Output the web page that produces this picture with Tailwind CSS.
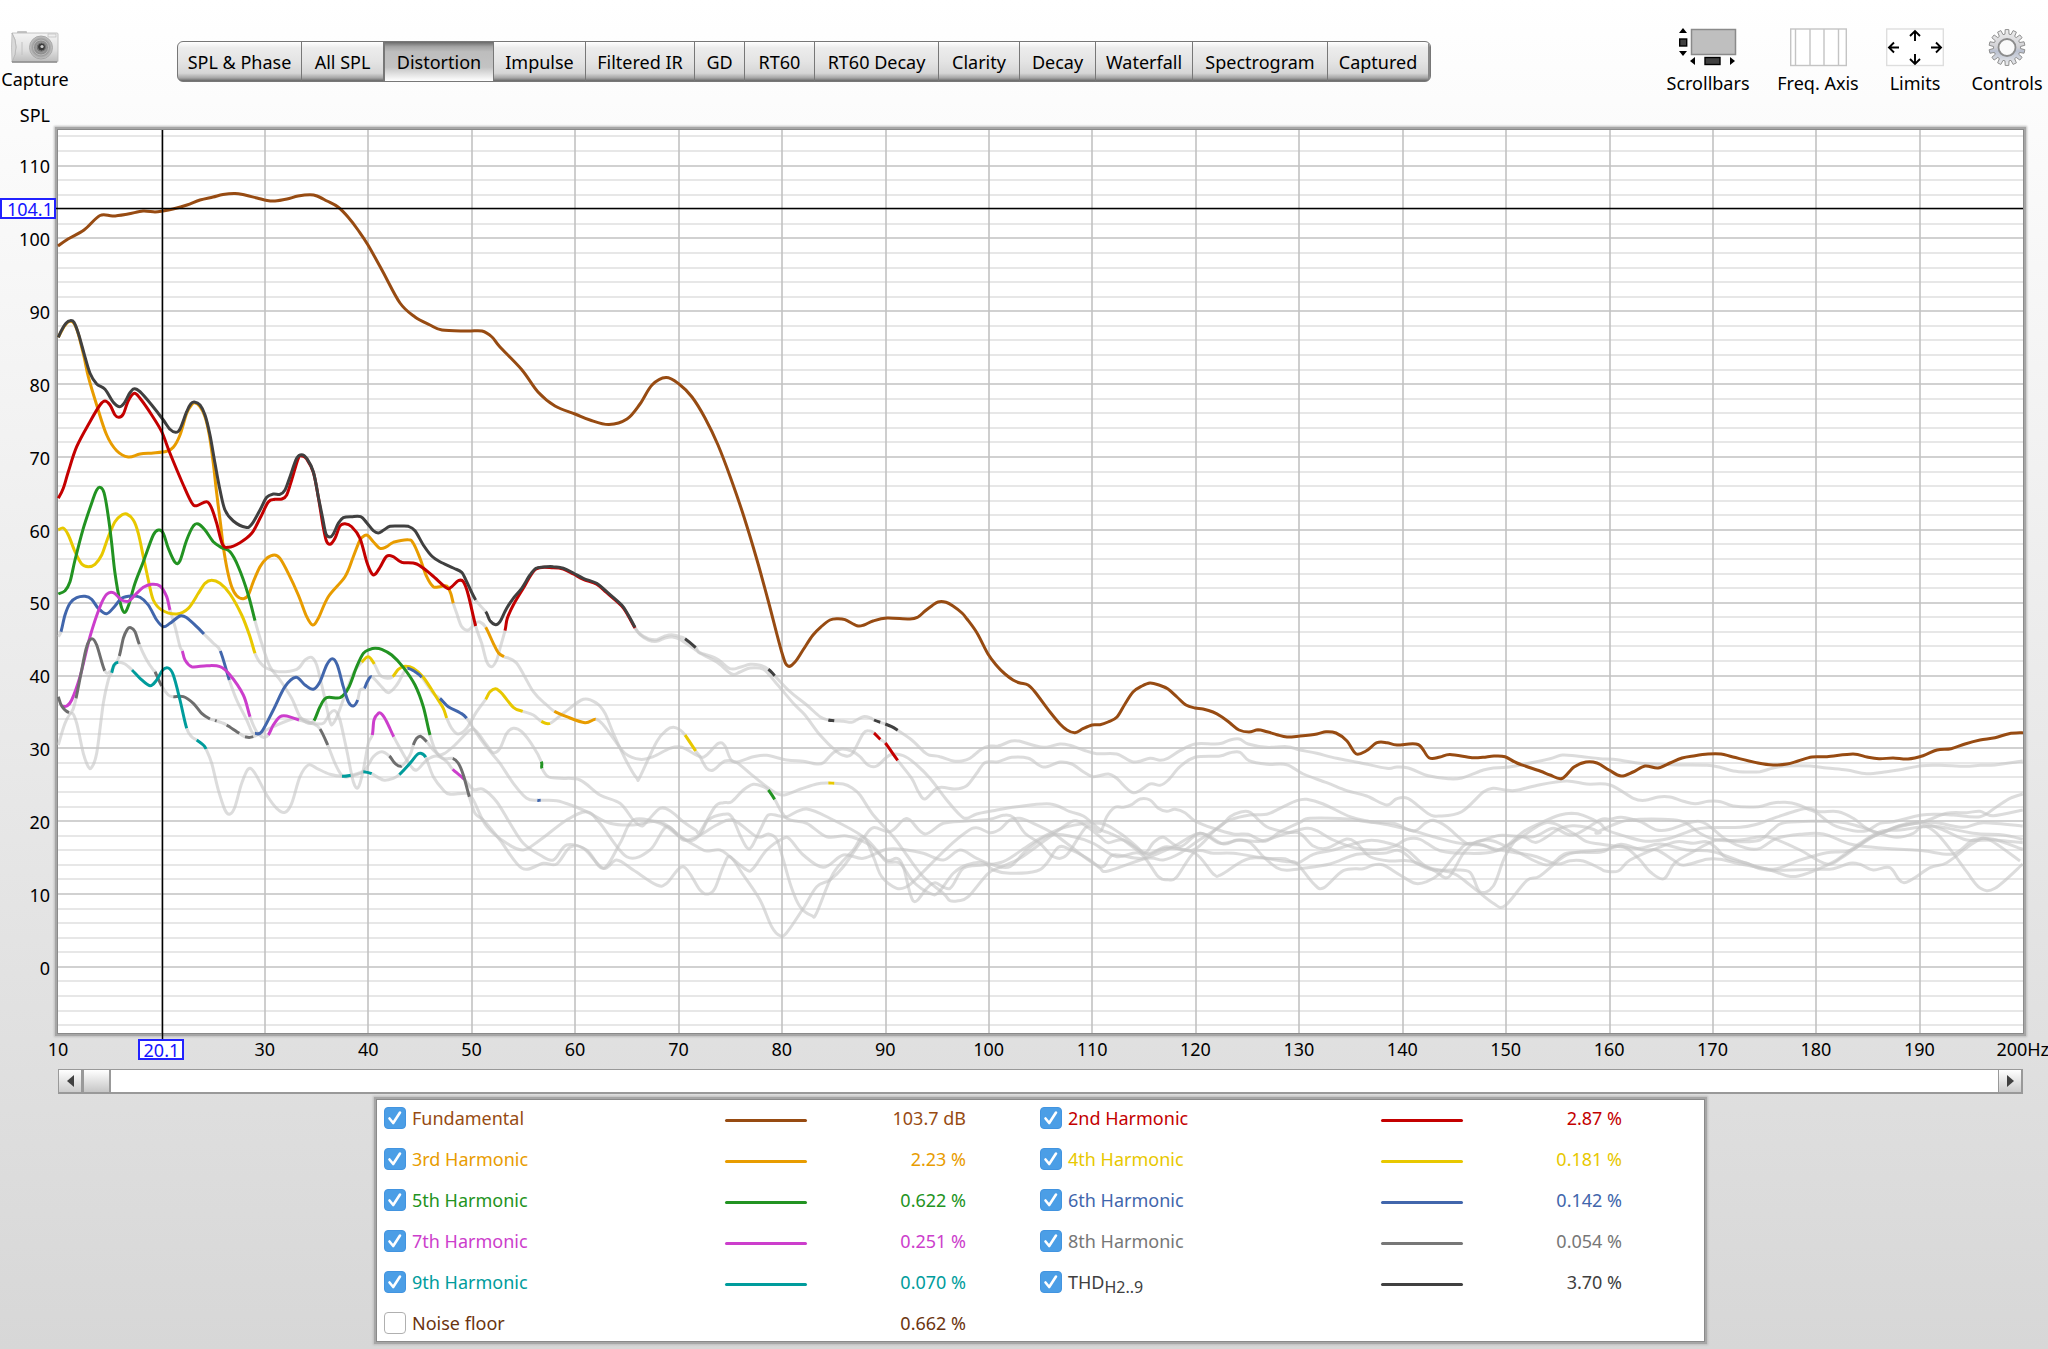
<!DOCTYPE html>
<html lang="en">
<head>
<meta charset="utf-8">
<meta name="viewport" content="width=device-width, initial-scale=1">
<title>Distortion</title>
<script src="https://cdn.jsdelivr.net/npm/@tailwindcss/browser@4"></script>
</head>
<body class="flex min-h-screen flex-col overflow-x-hidden bg-linear-to-b from-white to-[#d7d7d7] pb-2 font-['Noto_Sans',sans-serif] text-lg leading-6 text-black">

<header class="flex h-[102px] shrink-0 items-start">
  <button class="flex w-[70px] flex-col items-center gap-1 pt-[31px]">
    <svg class="h-8 w-12" viewBox="0 0 48 32" aria-hidden="true">
      <defs>
        <linearGradient id="body" x1="0" y1="0" x2="0" y2="1"><stop offset="0" stop-color="#f4f4f4"/><stop offset=".6" stop-color="#dedede"/><stop offset="1" stop-color="#bcbcbc"/></linearGradient>
        <radialGradient id="lens"><stop offset="0" stop-color="#222"/><stop offset=".25" stop-color="#555"/><stop offset=".4" stop-color="#999"/><stop offset=".6" stop-color="#8a8a8a"/><stop offset="1" stop-color="#c9c9c9"/></radialGradient>
      </defs>
      <rect x="6" y="0" width="10" height="3" rx="1" fill="#c4c4c4"/>
      <path d="M1 2H46q1 0 1 1V30q0 1-1 1H1Q5 24 5 16T1 2Z" fill="url(#body)" stroke="#b5b5b5" stroke-width=".8"/>
      <path d="M1 2Q5 9 5 16T1 31Q0 16 1 2Z" fill="#d9d9d9" stroke="#aaa" stroke-width=".6"/>
      <path d="M1 31H46" stroke="#8c8c8c" stroke-width="1.4"/>
      <path d="M11 11v13" stroke="#c2c2c2"/>
      <rect x="37" y="3" width="8" height="3" fill="#eee" stroke="#b5b5b5" stroke-width=".6"/>
      <circle cx="30" cy="16.500" r="11.500" fill="url(#lens)" stroke="#9d9d9d" stroke-width=".8"/>
      <circle cx="30" cy="16.500" r="7.500" fill="none" stroke="#bdbdbd"/>
      <circle cx="30.500" cy="16" r="4" fill="#3a3a3a" stroke="#777"/>
      <circle cx="31" cy="15.500" r="1.600" fill="#cfcfcf"/>
    </svg>
    <span>Capture</span>
  </button>

  <nav aria-label="Graphs" class="mt-[41px] ml-[107px] flex h-[41px] overflow-hidden rounded-md border border-[#777] bg-[linear-gradient(#fff,#ececec_15%,#e4e4e4_50%,#d6d6d6_80%,#a6a6a6_92%,#666)] whitespace-nowrap">
    <button class="w-[124px] border-r border-[#777]">SPL &amp; Phase</button>
    <button class="w-[82px] border-r border-[#777]">All SPL</button>
    <button aria-current="page" class="w-[110px] border-x border-[#777] bg-[linear-gradient(#6a6a6a,#a4a4a4_12%,#bdbdbd_25%,#c3c3c3_65%,#e6e6e6_85%,#fff)]">Distortion</button>
    <button class="w-[92px] border-r border-[#777]">Impulse</button>
    <button class="w-[109px] border-r border-[#777]">Filtered IR</button>
    <button class="w-[50px] border-r border-[#777]">GD</button>
    <button class="w-[70px] border-r border-[#777]">RT60</button>
    <button class="w-[124px] border-r border-[#777]">RT60 Decay</button>
    <button class="w-[81px] border-r border-[#777]">Clarity</button>
    <button class="w-[76px] border-r border-[#777]">Decay</button>
    <button class="w-[97px] border-r border-[#777]">Waterfall</button>
    <button class="w-[135px] border-r border-[#777]">Spectrogram</button>
    <button class="w-[102px] border-r-2 border-[#888]">Captured</button>
  </nav>

  <div class="ml-auto flex gap-[26px] pt-7 pr-1 whitespace-nowrap">
    <button class="flex w-[84px] flex-col items-center gap-1">
      <svg class="h-[39px] w-[60px]" viewBox="0 0 60 39" aria-hidden="true">
        <rect x="13.500" y="1.500" width="44" height="25" fill="#bfbfbf" stroke="#8a8a8a" stroke-width="1.500"/>
        <path d="M1 5h8L5 0ZM1 23h8l-4 5ZM17 29v8l-5-4ZM52 29v8l5-4Z"/>
        <rect x="1.700" y="11" width="7" height="7" fill="#404040" stroke="#000" stroke-width="1.400"/>
        <rect x="27" y="29.500" width="15" height="7" fill="#404040" stroke="#000" stroke-width="1.400"/>
      </svg>
      <span>Scrollbars</span>
    </button>
    <button class="flex w-[84px] flex-col items-center gap-1">
      <svg class="h-[39px] w-[57px]" viewBox="0 0 57 39" aria-hidden="true">
        <rect x=".7" y="1" width="55.600" height="36.500" fill="#fff" stroke="#c4c4c4" stroke-width="1.400"/>
        <path d="M5.500 1v36.500M20 1v36.500M34 1v36.500M48.500 1v36.500" stroke="#c4c4c4" stroke-width="1.400"/>
      </svg>
      <span>Freq. Axis</span>
    </button>
    <button class="flex w-[58px] flex-col items-center gap-1">
      <svg class="h-[39px] w-[58px]" viewBox="0 0 58 39" aria-hidden="true">
        <rect x=".7" y="1" width="56.600" height="36.500" fill="#fff" stroke="#dedede" stroke-width="1.400"/>
        <path d="M29 13V3M24 8l5-5 5 5M29 26v10M24 31l5 5 5-5M13 19.500H3M8 14.500l-5 5 5 5M45 19.500h10M50 14.500l5 5-5 5" fill="none" stroke="#000" stroke-width="1.900"/>
      </svg>
      <span>Limits</span>
    </button>
    <button class="flex w-[74px] flex-col items-center gap-1">
      <svg id="gear" class="h-[39px] w-[38px]" viewBox="-19 -19.500 38 39" aria-hidden="true">
        <defs><linearGradient id="steel" x1="0" y1="0" x2="0" y2="1"><stop offset="0" stop-color="#eee"/><stop offset=".5" stop-color="#d0d0d4"/><stop offset=".6" stop-color="#b9c0d0"/><stop offset="1" stop-color="#ededed"/></linearGradient></defs>
        <path fill="url(#steel)" stroke="#8f8f8f"/>
        <circle r="8.500" fill="#fafafa" stroke="#8c8c8c" stroke-width="1.800"/>
      </svg>
      <span>Controls</span>
    </button>
  </div>
</header>

<div class="h-7 w-[58px] shrink-0 pt-px pr-2 text-right">SPL</div>

<main class="flex grow flex-col">
  <div class="flex min-h-[400px] grow">
    <div class="relative flex w-[58px] shrink-0 flex-col pr-2 text-right">
      <div class="flex grow-[5] basis-0 items-end justify-end"><span class="flex h-0 items-center">110</span></div>
      <div class="flex grow-[10] basis-0 items-end justify-end"><span class="flex h-0 items-center">100</span></div>
      <div class="flex grow-[10] basis-0 items-end justify-end"><span class="flex h-0 items-center">90</span></div>
      <div class="flex grow-[10] basis-0 items-end justify-end"><span class="flex h-0 items-center">80</span></div>
      <div class="flex grow-[10] basis-0 items-end justify-end"><span class="flex h-0 items-center">70</span></div>
      <div class="flex grow-[10] basis-0 items-end justify-end"><span class="flex h-0 items-center">60</span></div>
      <div class="flex grow-[10] basis-0 items-end justify-end"><span class="flex h-0 items-center">50</span></div>
      <div class="flex grow-[10] basis-0 items-end justify-end"><span class="flex h-0 items-center">40</span></div>
      <div class="flex grow-[10] basis-0 items-end justify-end"><span class="flex h-0 items-center">30</span></div>
      <div class="flex grow-[10] basis-0 items-end justify-end"><span class="flex h-0 items-center">20</span></div>
      <div class="flex grow-[10] basis-0 items-end justify-end"><span class="flex h-0 items-center">10</span></div>
      <div class="flex grow-[10] basis-0 items-end justify-end"><span class="flex h-0 items-center">0</span></div>
      <div class="grow-[9] basis-0"></div>
      <output class="absolute top-[68px] left-0 z-10 flex h-[21px] w-14 items-center justify-end border-2 border-[#2222ff] bg-white pr-px text-[#1414ff]">104.1</output>
    </div>
    <div class="grow bg-white shadow-[0_0_0_1px_#8a8a8a,0_0_0_3px_#a6a6a6,0_0_2px_4px_#bdbdbd]">
      <svg id="plot" class="block h-full w-full overflow-visible" viewBox="58 130 1965 903" preserveAspectRatio="none" role="img" aria-label="Distortion plot, SPL against frequency"></svg>
    </div>
    <div class="w-[25px] shrink-0"></div>
  </div>

  <div class="mr-[25px] ml-[58px] flex h-9 shrink-0 justify-between pt-1 whitespace-nowrap">
    <span class="flex w-0 justify-center">10</span>
    <output class="z-10 flex w-0 justify-center"><span class="mt-[2px] flex h-[21px] w-[46px] shrink-0 items-center justify-center border-2 border-[#2222ff] bg-white text-[#1414ff]">20.1</span></output>
    <span class="flex w-0 justify-center">30</span>
    <span class="flex w-0 justify-center">40</span>
    <span class="flex w-0 justify-center">50</span>
    <span class="flex w-0 justify-center">60</span>
    <span class="flex w-0 justify-center">70</span>
    <span class="flex w-0 justify-center">80</span>
    <span class="flex w-0 justify-center">90</span>
    <span class="flex w-0 justify-center">100</span>
    <span class="flex w-0 justify-center">110</span>
    <span class="flex w-0 justify-center">120</span>
    <span class="flex w-0 justify-center">130</span>
    <span class="flex w-0 justify-center">140</span>
    <span class="flex w-0 justify-center">150</span>
    <span class="flex w-0 justify-center">160</span>
    <span class="flex w-0 justify-center">170</span>
    <span class="flex w-0 justify-center">180</span>
    <span class="flex w-0 justify-center">190</span>
    <span class="flex w-0 justify-center">200Hz</span>
  </div>

  <div class="mr-[25px] ml-[58px] flex h-[25px] shrink-0 border-t border-b-2 border-[#999] bg-white">
    <button aria-label="Scroll left" class="flex w-[25px] items-center justify-center border-r-2 border-l border-[#999] bg-linear-to-b from-white to-[#ccc]"><svg class="h-3 w-[7px]" viewBox="0 0 7 12"><path d="M7 0v12L0 6Z" fill="#404040"/></svg></button>
    <div class="w-7 border-r-2 border-l border-[#999] bg-linear-to-b from-white to-[#c6c6c6]"></div>
    <button aria-label="Scroll right" class="ml-auto flex w-[25px] items-center justify-center border-r-2 border-l border-[#999] bg-linear-to-b from-white to-[#ccc]"><svg class="h-3 w-[7px]" viewBox="0 0 7 12"><path d="M0 0v12L7 6Z" fill="#404040"/></svg></button>
  </div>

  <div class="mt-[6px] mr-[25px] ml-[58px] flex shrink-0 justify-center">
    <div id="legend" class="grid w-full max-w-[1327px] grid-cols-[656px_656px] gap-y-[5px] bg-white pl-[7px] shadow-[0_0_0_1px_#8a8a8a,0_0_0_3px_#a6a6a6,0_0_2px_4px_#bdbdbd]"></div>
  </div>
</main>

<script>
const NS = 'http://www.w3.org/2000/svg';
const plot = document.getElementById('plot');
function add(parent, tag, attrs) {
  const el = document.createElementNS(NS, tag);
  for (const k in attrs) el.setAttribute(k, attrs[k]);
  parent.appendChild(el);
  return el;
}

/* Grid: a line each 2 dB, heavier each 10 dB and each 10 Hz */
for (let db = -8; db < 115; db += 2) {
  const y = Math.round(966.9 - 7.285 * db);
  const major = db % 10 === 0;
  add(plot, 'path', { d: `M58 ${y}H2023`, stroke: major ? '#c2c2c2' : '#dfdfdf', 'stroke-width': major ? 1.6 : 1.3 });
}
for (let f = 20; f < 200; f += 10) {
  add(plot, 'path', { d: `M${Math.round(58.2 + 10.342 * (f - 10))} 130V1033`, stroke: '#c2c2c2', 'stroke-width': 1.6 });
}

/* Traces are held in tiles. A letter picks the tile: origin x, origin y, units per pixel.
   "+" starts a part above the noise floor, drawn in the trace's colour, "-" ends it. */
const TILES = { P: [0, 0, 1], A: [0, 110, 3], B: [40, 370, 3], C: [300, 430, 3], D: [700, 560, 3], E: [1100, 640, 3], F: [1560, 640, 3] };
const TRACES = [
  { color: '#e8c800', data: `B + 55,480 70,474 85,495 105,545 125,582 145,590 165,583 185,555 205,500 225,455 245,435 260,432 280,450 295,490 310,560 325,630 340,690 365,720 410,732 445,715 475,670 495,640 515,631 540,640 570,672 605,735 630,800 645,850 - 658,875 680,895 715,905 770,898 795,870 815,862 830,885 850,965 870,1055 880,1060 895,1030 915,975 940,910 + C 185,697 205,680 223,702 - 240,735 262,745 + 278,740 295,718 315,709 340,715 370,742 405,795 430,835 440,864 - 455,895 475,912 500,895 530,845 + 557,808 570,785 587,776 605,790 640,832 668,844 - 700,855 + 724,874 750,880 - 790,850 850,808 890,820 915,850 940,910 980,995 1010,1044 1020,1040 1070,935 1100,900 1120,892 1140,900 + 1155,915 1187,963 - D 0,590 20,625 40,630 75,603 110,608 150,640 200,680 245,705 300,688 350,672 + 385,669 403,670 - 430,672 455,683 480,705 520,765 580,830 620,885 670,950 730,1000 750,1022 775,1022 805,1010 865,940 910,918 960,895 1050,830 1120,783 1160,800 1200,830 E 25,608 70,600 140,640 200,620 280,630 350,565 390,540 450,525 500,523 540,505 590,482 620,478 670,492 750,530 810,545 880,558 950,575 1000,590 1100,612 1180,590 1210,586 1300,590 1360,565 1420,585 1500,540 F 150,538 184,532 240,545 290,570 330,568 400,545 440,553 500,600 560,625 600,625 650,595 720,583 790,582 870,612 940,622 1020,628 1090,632 1180,642 1240,600 1300,598 1388,628` },
  { color: '#e89c00', data: `A + 175,682 185,662 198,642 210,634 222,640 235,672 252,740 265,800 290,885 320,975 350,1022 385,1041 420,1032 460,1029 500,1024 520,1012 540,975 560,910 575,884 585,878 600,890 615,920 628,975 640,1060 650,1150 662,1245 B 550,530 562,600 575,650 590,677 610,686 625,675 640,635 660,590 680,565 703,555 720,565 745,610 775,675 800,740 818,765 835,745 865,680 915,620 940,560 960,510 975,496 C 205,318 220,335 240,355 260,350 280,337 325,329 340,340 360,385 380,440 400,470 420,470 440,468 452,490 460,520 - 470,550 485,590 505,600 525,580 540,576 + 557,592 580,640 595,668 612,680 - 650,700 700,785 740,825 + 763,844 800,860 855,878 887,868 - 910,885 940,925 975,970 1020,988 1060,980 1110,955 1145,952 1200,980 D 20,585 55,550 75,558 100,605 160,590 200,586 260,600 310,604 350,612 370,608 400,578 425,567 455,573 480,590 505,616 530,618 570,585 610,587 650,615 690,655 740,720 780,765 800,775 830,762 880,752 950,740 1050,732 1110,755 1150,768 1200,808 E 30,580 70,600 130,640 160,608 190,592 240,620 300,580 360,610 420,600 480,604 560,580 620,565 650,572 700,600 770,625 830,630 880,620 920,598 960,598 1020,632 1100,640 1180,635 1250,600 1320,555 1360,550 1420,580 1460,605 1500,612 F 180,620 240,625 300,612 380,630 460,635 560,670 640,688 720,660 800,638 870,632 940,590 1010,560 1090,545 1160,520 1220,518 1260,514 1300,527 1388,510` },
  { color: '#229322', data: `B + 55,672 75,662 90,635 105,570 130,475 160,385 170,360 180,352 192,368 205,440 215,520 225,610 240,695 252,727 265,708 285,640 310,575 340,495 357,480 370,490 385,535 405,577 420,572 440,510 460,468 475,462 495,480 520,515 545,533 570,545 595,590 625,675 645,752 - 665,820 690,890 720,930 755,985 780,1040 805,1060 + 822,1052 840,1010 860,983 900,983 925,955 950,890 970,850 990,838 C 225,655 245,658 275,675 310,712 345,765 370,830 390,915 - 410,968 430,972 465,945 510,900 530,905 560,945 580,968 600,955 620,910 640,895 665,905 700,950 + 724,995 726,1015 - 745,1040 780,1045 840,1050 900,1095 960,1120 1000,1170 1025,1188 1045,1170 1080,1135 1110,1142 1150,1175 1187,1200 D 0,815 45,740 70,728 95,725 130,690 160,673 190,680 + 205,690 224,718 - 260,775 320,790 380,830 440,828 500,850 560,900 590,895 610,920 640,1023 680,985 705,968 750,985 790,925 850,915 910,905 980,860 1030,830 1100,800 1200,790 E 60,580 110,620 140,645 200,625 285,640 340,702 365,703 450,655 560,665 590,670 640,730 670,744 730,692 790,686 820,675 850,675 900,705 945,730 980,725 1020,700 1070,640 1110,610 1200,630 1260,640 1310,650 1370,672 1410,662 1450,663 1500,685 F 135,693 175,693 210,660 290,625 350,605 400,610 440,605 470,625 500,655 560,670 620,690 770,688 820,686 870,670 900,673 940,690 990,683 1032,728 1110,683 1160,668 1240,610 1285,598 1380,663` },
  { color: '#4166ac', data: `B 55,800 + 63,785 75,735 90,700 110,683 135,679 155,688 175,715 200,731 225,708 245,685 275,678 300,682 325,705 350,750 370,770 390,760 420,738 440,743 470,770 492,792 - 520,820 + 541,843 568,930 - 590,990 620,1050 635,1085 + 645,1090 665,1085 700,1020 735,950 768,922 795,945 820,958 840,935 860,885 877,866 892,885 910,950 925,995 940,1008 953,990 - 960,960 + 973,955 982,935 995,920 - C 240,765 265,788 290,765 310,730 + 322,715 345,725 365,742 - 400,790 + 420,805 445,830 480,848 500,865 - 540,925 575,970 600,1000 640,1060 680,1105 + 712,1111 722,1111 - 770,1112 820,1128 870,1150 930,1180 1000,1185 1080,1175 1160,1230 D 0,825 25,780 70,763 95,770 120,825 140,862 155,860 185,800 205,765 235,767 260,770 320,747 400,780 490,830 530,870 560,905 600,910 640,965 690,1000 715,998 760,940 800,915 850,908 880,930 930,940 1010,933 1040,910 1075,862 1110,868 1170,900 1200,925 E 25,693 140,655 190,660 240,640 290,605 360,560 390,530 420,517 450,517 500,560 560,577 600,580 640,618 680,625 740,597 770,610 810,650 870,663 930,663 1000,690 1045,712 1090,640 1130,605 1180,603 1250,635 1340,675 1400,640 1500,637 F 150,625 184,613 250,630 290,630 340,660 370,676 440,658 480,658 540,672 620,687 680,707 715,708 780,685 830,660 900,610 960,575 1020,570 1090,560 1140,560 1240,580 1330,585 1388,598` },
  { color: '#cc3ecc', data: `B + 65,1008 80,1008 95,990 120,920 150,800 180,710 200,673 220,668 245,690 265,694 285,675 310,652 335,643 360,648 380,680 390,720 - 405,770 420,830 + 427,843 435,870 455,890 500,887 540,890 570,915 610,975 630,1040 - 650,1085 670,1102 + 685,1095 700,1065 720,1040 740,1038 777,1050 - 820,1060 850,1060 870,1030 885,1022 900,1050 920,1140 940,1235 955,1252 970,1200 985,1120 + C 217,915 222,870 235,850 245,852 260,875 281,920 - 300,955 330,1005 350,1020 380,990 410,978 440,995 + 458,1018 493,1048 - 520,1078 550,1078 590,1115 630,1180 D -530,850 -480,885 -440,900 -400,855 -340,870 -290,925 -240,850 -200,780 -120,790 -60,830 0,865 20,873 60,870 90,890 140,930 160,925 200,870 250,835 270,838 310,885 370,922 430,885 490,895 560,868 620,870 670,880 730,900 780,870 830,895 880,915 930,920 980,870 1050,825 1120,830 1180,850 E 50,650 120,640 175,710 205,719 230,711 285,635 340,640 400,640 500,655 555,656 590,670 640,643 700,630 800,602 860,608 920,630 980,680 1060,700 1110,735 1180,790 1215,797 1280,722 1320,708 1400,645 1480,632 F 140,628 180,618 205,628 240,660 272,697 312,716 345,668 400,635 470,600 540,605 600,600 640,567 680,547 830,545 900,560 960,580 1010,592 1060,580 1090,558 1130,580 1180,640 1220,695 1260,744 1305,745 1388,672` },
  { color: '#6e6e6e', data: `B + 55,980 65,1008 87,1028 - 98,1020 + 108,985 125,900 140,830 155,806 170,825 194,902 - 210,905 225,885 + 238,858 250,805 262,778 272,773 285,785 298,823 - 320,870 340,900 + 345,905 365,948 - 385,975 + 400,980 430,980 460,1000 485,1030 510,1047 - + 525,1051 530,1053 - 545,1058 + 560,1065 598,1090 - + 615,1100 640,1100 - 700,1070 770,1045 820,1062 + 840,1077 863,1125 - 885,1180 905,1215 925,1220 970,1205 C 220,980 245,965 + 268,978 285,1000 305,1008 - 330,975 + 340,945 350,925 362,919 380,935 - 400,960 430,985 + 458,985 475,1000 490,1035 508,1100 - 525,1150 550,1170 D -600,840 -534,925 -470,910 -430,912 -390,862 -350,865 -290,925 -250,900 -200,930 -130,975 -100,970 -50,920 0,990 25,1002 45,985 70,920 90,890 130,945 180,1020 215,1100 240,1127 260,1118 310,1045 350,980 390,960 430,920 490,835 520,803 570,815 610,780 630,780 675,822 730,790 800,783 870,778 910,766 940,772 975,820 1020,850 1060,890 1100,885 1160,800 1200,815 E 20,530 45,502 70,502 95,494 120,477 150,480 175,505 200,514 225,508 255,518 285,543 340,565 400,582 445,583 495,604 540,575 600,547 630,535 740,537 800,545 880,550 940,573 975,550 1000,541 1040,560 1100,610 1150,615 1190,632 1220,618 1270,575 1330,545 1380,525 1415,520 1450,526 1500,550 F 140,570 200,590 250,603 280,603 330,595 400,570 440,563 540,562 590,553 640,535 700,515 745,505 780,515 835,515 880,535 920,565 960,580 1010,560 1050,548 1090,545 1140,550 1210,562 1270,548 1388,558` },
  { color: '#009c9c', data: `B 55,1125 75,1060 95,1030 110,1060 130,1150 145,1190 155,1192 170,1150 190,1000 205,930 + 215,908 222,885 235,877 - 255,882 + 276,900 300,925 330,947 350,930 368,900 385,894 400,915 420,990 440,1075 - 455,1100 + 470,1110 490,1125 498,1137 - 515,1180 535,1260 555,1320 570,1332 585,1310 605,1240 625,1197 645,1210 680,1275 710,1315 735,1327 755,1300 780,1220 805,1185 830,1195 870,1213 + 906,1219 932,1216 - 960,1208 + 970,1205 995,1211 - C 250,1050 280,1045 + 298,1034 330,1000 350,975 362,970 377,982 - 400,1040 430,1080 450,1093 500,1090 520,1110 560,1190 D -580,850 -530,870 -480,840 -400,780 -340,755 -300,790 -220,890 -150,870 -100,800 -50,840 0,825 50,795 100,780 170,830 205,822 230,838 250,900 275,985 300,1040 335,1067 350,1058 400,940 460,870 490,830 520,890 545,950 590,985 620,980 650,955 740,865 800,815 830,803 870,818 900,808 930,780 960,775 1000,790 1060,820 1100,850 1200,920 E 40,645 130,655 220,620 300,580 370,612 410,600 450,608 490,650 530,683 560,691 600,686 690,672 770,643 850,640 900,632 950,670 1000,690 1060,690 1110,697 1140,755 1180,738 1215,650 1260,590 1310,607 1380,565 1420,557 1460,562 1500,577 F 110,577 184,545 240,538 310,538 370,545 420,580 470,600 540,600 600,590 640,595 720,630 800,672 850,650 920,600 960,580 1040,555 1090,550 1150,570 1220,600 1300,600 1388,608` },
  { color: '#c40000', data: `A + 175,1165 190,1135 205,1085 230,1010 270,935 300,885 315,873 330,885 345,915 357,922 370,912 385,872 403,850 420,865 455,915 485,965 510,1030 550,1125 575,1178 590,1187 620,1175 635,1195 650,1240 B 547,522 565,532 600,518 635,490 660,445 685,396 705,388 725,387 740,375 755,330 775,265 787,258 800,267 820,307 835,382 850,472 860,515 872,522 885,505 900,468 915,461 935,470 C 180,325 200,395 215,430 225,433 240,412 260,379 280,380 305,397 350,402 395,435 440,474 455,470 475,452 490,455 505,495 527,588 - 545,640 560,695 575,710 590,690 600,655 + 615,602 622,565 640,525 670,475 708,417 760,413 790,417 820,432 850,448 890,463 920,488 965,528 985,558 1005,594 - 1020,614 1045,630 1070,634 1095,624 1115,621 1140,628 1187,660 D 0,280 50,306 95,342 120,336 150,324 190,328 225,365 280,430 315,465 360,525 410,575 430,586 455,583 490,520 510,513 + 522,519 541,538 - + 556,549 593,601 - 635,655 655,695 675,717 715,683 765,687 800,677 830,640 855,608 895,605 935,592 985,595 1030,621 1080,606 1115,612 1150,635 1180,650 1225,642 1250,655 1300,698 E 150,432 180,436 205,420 240,380 285,352 360,348 390,338 420,337 447,362 500,373 560,374 610,402 680,428 740,452 800,468 860,495 890,476 925,476 985,521 1020,528 1085,515 1150,456 1180,445 1215,450 1250,451 1320,434 1400,423 F 80,432 150,435 220,475 255,481 295,471 330,471 370,484 405,491 445,484 482,485 520,498 595,500 635,490 675,487 715,494 745,508 770,518 820,555 880,572 920,572 960,550 1000,545 1085,525 1140,523 1180,525 1260,530 1310,500 1350,475 1388,462` },
  { color: '#974b12', data: `P + 58,246 68,239 84,230 100,215.5 113,216 128,214 143,211 155,212 163,211 173,209 187,205 200,200 213,197 223,194.5 235,193.5 245,195 257,198 267,200.5 275,201 287,199 298,196 310,194.7 317,196 327,201 338,207 348,217 358,230 368,245 383,272 400,303 415,317 430,325 442,330 467,331 482,331 492,337 500,347 522,370 538,392 555,406 575,414 590,420 609,424.5 627,419 640,404 652,385 666,377.5 679,384 692,397 705,418 718,445 731,479 744,517 757,560 768,600 782,653 788,666 795,662 803,650 813,635 822,626 830,620 837,618.7 845,619.7 857,625.7 864,625 873,621 887,618 910,619 918,617 925,611 932,605.7 938,602 946,602.3 953,606 962,613 967,619 977,633 988,654 997,666 1005,674 1013,680 1020,683 1028,685 1035,692 1050,712 1060,724 1067,730 1075,732.7 1083,728.7 1092,725 1100,724.7 1108,722 1117,717 1125,704 1133,692 1142,686 1150,683 1159,685 1168,689 1177,697 1186,705 1195,708 1203,709 1213,712 1222,717 1230,723 1239,730 1249,732 1258,729.7 1267,731.7 1277,734.7 1287,737 1300,736 1317,734 1326,731.7 1336,733 1347,741 1356,753.7 1366,751 1377,742.7 1387,742.7 1397,745 1418,744.5 1429,757.7 1440,757 1450,754.5 1472,757.7 1483,757.3 1494,756 1505,756.7 1517,763 1540,771 1550,775 1562,778.5 1574,767 1586,762 1597,763 1609,770 1621,776 1633,772 1645,766 1658,768 1670,763 1682,758 1695,755.7 1708,754 1721,754 1733,757 1758,763 1773,765 1787,764 1798,761 1812,757 1827,756.7 1853,754 1867,757 1879,758.7 1893,758 1908,759 1923,755.7 1937,750 1951,748.7 1965,744 1980,740 1995,737.7 2009,733.7 2023,732.7` },
  { color: '#404040', data: `A + 175,682 185,660 198,640 210,632 222,637 235,670 252,730 270,790 290,822 315,838 340,877 358,890 372,880 390,848 403,836 420,845 455,885 490,930 510,958 527,967 540,957 560,905 572,882 583,876 600,885 615,915 630,975 645,1060 660,1140 675,1200 700,1233 737,1252 755,1243 780,1200 800,1162 820,1152 840,1153 855,1140 870,1100 890,1045 905,1034 920,1045 940,1085 955,1160 C 68,265 78,312 90,321 100,312 115,280 130,263 155,260 182,260 200,278 220,302 235,309 250,301 270,289 300,288 325,289 345,302 370,345 395,378 420,395 460,414 485,427 500,455 527,510 - + 557,545 570,572 587,584 600,575 620,535 640,505 665,475 690,435 708,415 730,411 760,410 790,415 820,429 850,445 890,460 920,485 965,525 985,555 1005,592 - 1020,612 1045,626 1070,629 1095,618 1115,614 1140,620 + 1155,626 1187,653 - D 0,278 50,296 90,326 120,322 150,313 180,316 + 205,328 224,347 - 270,395 320,435 360,470 + 385,480 403,482 - 430,484 455,487 470,480 490,470 510,473 + 522,480 541,487 - + 556,492 575,500 593,511 - 635,540 675,578 690,586 720,590 760,603 785,603 810,595 845,567 870,558 895,558 935,543 960,544 1000,556 1035,562 1080,552 1110,556 1150,570 1190,581 1250,582 E 100,366 150,355 180,361 203,355 240,332 285,312 340,312 365,310 390,300 418,297 445,312 500,322 560,320 600,330 650,340 710,355 780,368 860,385 890,381 925,384 985,407 1045,416 1085,414 1150,390 1180,384 1220,382 1275,372 1350,356 1387,345 1430,348 1500,356 F 160,358 240,370 300,373 350,375 440,376 480,382 520,393 560,396 600,395 640,384 680,378 750,378 800,384 860,390 920,401 980,395 1020,389 1085,377 1140,376 1215,379 1260,376 1305,375 1388,363` },
];

function parse(data) {
  const pts = [];
  let tile = TILES.P, on = false;
  for (const tok of data.split(' ')) {
    if (TILES[tok]) tile = TILES[tok];
    else if (tok === '+') on = true;
    else if (tok === '-') { on = false; pts[pts.length - 1].on = false; }
    else {
      const [x, y] = tok.split(',').map(Number);
      pts.push({ x: tile[0] + x / tile[2], y: tile[1] + y / tile[2], on });
    }
  }
  return pts;
}

/* Catmull-Rom spline written as cubic Beziers; keep(p) tells which spans are drawn */
function spline(pts, keep) {
  let d = '', open = false;
  for (let i = 0; i < pts.length - 1; i++) {
    const p0 = pts[i - 1] || pts[i], p1 = pts[i], p2 = pts[i + 1], p3 = pts[i + 2] || p2;
    if (!keep(p1)) { open = false; continue; }
    if (!open) d += `M${p1.x.toFixed(1)} ${p1.y.toFixed(1)}`;
    open = true;
    const k = [p1.x + (p2.x - p0.x) / 6, p1.y + (p2.y - p0.y) / 6, p2.x - (p3.x - p1.x) / 6, p2.y - (p3.y - p1.y) / 6, p2.x, p2.y];
    d += 'C' + k.map(n => n.toFixed(1)).join(' ');
  }
  return d;
}

const parsed = TRACES.map(t => ({ color: t.color, pts: parse(t.data) }));
for (const t of parsed) {
  if (t.color === '#974b12') continue;
  add(plot, 'path', { d: spline(t.pts, p => !p.on), fill: 'none', stroke: '#c4c4c4', 'stroke-opacity': .6, 'stroke-width': 3 });
}
for (const t of parsed) {
  add(plot, 'path', { d: spline(t.pts, p => p.on), fill: 'none', stroke: t.color, 'stroke-width': 3 });
}

/* Cursor */
add(plot, 'path', { d: 'M162.500 130V1040M56 208.500H2023', fill: 'none', stroke: '#000', 'stroke-width': 1.5 });

let g = '';
for (let i = 0; i < 14; i++) {
  const a = i * Math.PI / 7;
  [[-.15, 13.5], [-.1, 18], [.1, 18], [.15, 13.5]].forEach(([o, r]) => {
    g += (g ? 'L' : 'M') + (r * Math.sin(a + o)).toFixed(2) + ' ' + (-r * Math.cos(a + o)).toFixed(2);
  });
}
document.querySelector('#gear path').setAttribute('d', g + 'Z');

/* Legend */
const ROWS = [
  ['Fundamental', '103.7 dB', 'text-[#974b12]'],
  ['2nd Harmonic', '2.87 %', 'text-[#c40000]'],
  ['3rd Harmonic', '2.23 %', 'text-[#e89c00]'],
  ['4th Harmonic', '0.181 %', 'text-[#e8c800]'],
  ['5th Harmonic', '0.622 %', 'text-[#229322]'],
  ['6th Harmonic', '0.142 %', 'text-[#4166ac]'],
  ['7th Harmonic', '0.251 %', 'text-[#cc3ecc]'],
  ['8th Harmonic', '0.054 %', 'text-[#777777]'],
  ['9th Harmonic', '0.070 %', 'text-[#009c9c]'],
  ['THD<sub class="text-base">H2..9</sub>', '3.70 %', 'text-[#404040]'],
  ['Noise floor', '0.662 %', 'text-[#6b3410]'],
];
document.getElementById('legend').innerHTML = ROWS.map(([name, value, color], i) => {
  const noise = name === 'Noise floor';
  return `<div class="flex h-9 items-center ${color}">
    <label for="t${i}" class="flex w-[341px] items-center gap-[6px]">
      <span class="grid size-[22px] place-items-center">
        <input id="t${i}" type="checkbox" ${noise ? '' : 'checked'} class="peer col-start-1 row-start-1 size-[22px] appearance-none rounded-[4px] border border-[#b0b0b0] bg-white checked:border-[#4294e0] checked:bg-[#4b9ee6]">
        <svg class="pointer-events-none invisible col-start-1 row-start-1 size-[22px] peer-checked:visible" viewBox="0 0 22 22"><path d="M5.500 11.500l3.700 4.500L16 5.500" fill="none" stroke="#fff" stroke-width="2.600" stroke-linecap="round" stroke-linejoin="round"/></svg>
      </span>
      <span>${name}</span>
    </label>
    <span class="mt-1 h-[3px] w-[82px] rounded-full ${noise ? '' : 'bg-current'}"></span>
    <span class="w-[159px] text-right">${value}</span>
  </div>`;
}).join('');
</script>
</body>
</html>
